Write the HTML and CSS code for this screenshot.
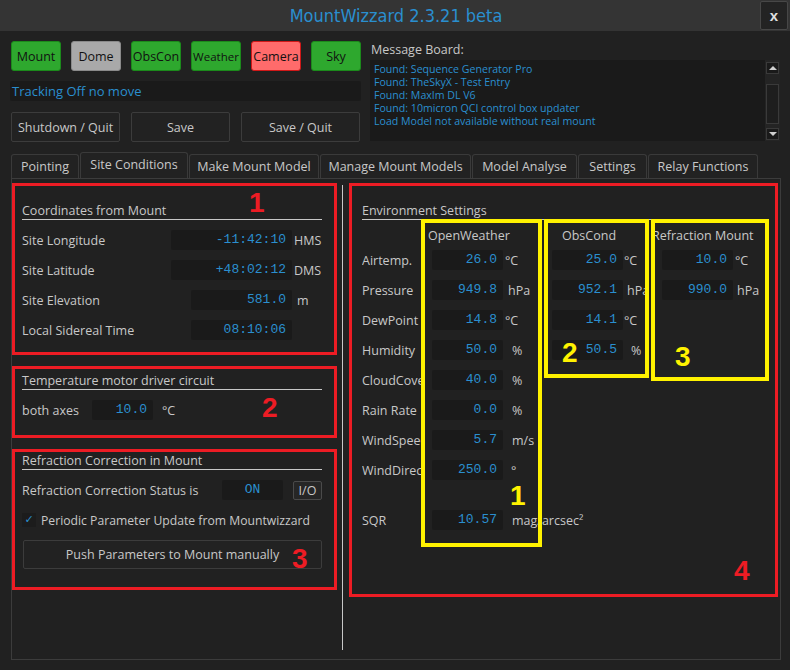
FILE: index.html
```html
<!DOCTYPE html>
<html>
<head>
<meta charset="utf-8">
<link rel="stylesheet" href="styles.css">
</head>
<body>
<div class="app">
  <header class="titlebar">
    <h1 class="title">MountWizzard 2.3.21 beta</h1>
    <button class="close">x</button>
  </header>

  <section class="top">
    <div class="controls">
      <div class="dev-row">
        <button class="dev ok">Mount</button>
        <button class="dev off">Dome</button>
        <button class="dev ok">ObsCon</button>
        <button class="dev ok small">Weather</button>
        <button class="dev err">Camera</button>
        <button class="dev ok">Sky</button>
      </div>
      <div class="status">Tracking Off no move</div>
      <div class="act-row">
        <button class="act a1">Shutdown / Quit</button>
        <button class="act a2">Save</button>
        <button class="act a3">Save / Quit</button>
      </div>
    </div>
    <div class="msgboard">
      <div class="mb-label">Message Board:</div>
      <div class="mb-box">
        <div class="mb-text">
          <div>Found: Sequence Generator Pro</div>
          <div>Found: TheSkyX - Test Entry</div>
          <div>Found: MaxIm DL V6</div>
          <div>Found: 10micron QCI control box updater</div>
          <div>Load Model not available without real mount</div>
        </div>
        <div class="scroll">
          <div class="sb-btn"><svg width="10" height="6" viewBox="0 0 10 6"><polygon points="1,5 5,1 9,5" fill="#d0d0d0"/></svg></div>
          <div class="sb-thumb"></div>
          <div class="sb-btn"><svg width="10" height="6" viewBox="0 0 10 6"><polygon points="1,1 9,1 5,5" fill="#d0d0d0"/></svg></div>
        </div>
      </div>
    </div>
  </section>

  <nav class="tabs">
    <div class="tab t1">Pointing</div>
    <div class="tab sel t2">Site Conditions</div>
    <div class="tab t3">Make Mount Model</div>
    <div class="tab t4">Manage Mount Models</div>
    <div class="tab t5">Model Analyse</div>
    <div class="tab t6">Settings</div>
    <div class="tab t7">Relay Functions</div>
  </nav>

  <main class="panel">
    <div class="left">
      <section class="grp g1">
        <div class="gtitle">Coordinates from Mount</div>
        <div class="rows">
          <div class="row"><span class="lbl">Site Longitude</span><span class="val w121">-11:42:10</span><span class="unit">HMS</span></div>
          <div class="row"><span class="lbl">Site Latitude</span><span class="val w121">+48:02:12</span><span class="unit">DMS</span></div>
          <div class="row"><span class="lbl">Site Elevation</span><span class="val w101">581.0</span><span class="unit pad">m</span></div>
          <div class="row"><span class="lbl">Local Sidereal Time</span><span class="val w101">08:10:06</span><span class="unit"></span></div>
        </div>
      </section>

      <section class="grp g2">
        <div class="gtitle">Temperature motor driver circuit</div>
        <div class="rows">
          <div class="row"><span class="lbl fixed">both axes</span><span class="val w61">10.0</span><span class="unit2">°C</span></div>
        </div>
      </section>

      <section class="grp g3">
        <div class="gtitle">Refraction Correction in Mount</div>
        <div class="rows">
          <div class="row"><span class="lbl">Refraction Correction Status is</span><span class="val w61 center">ON</span><button class="io">I/O</button></div>
          <div class="row"><span class="check">✓</span><span class="chk-lbl">Periodic Parameter Update from Mountwizzard</span></div>
        </div>
        <button class="push">Push Parameters to Mount manually</button>
      </section>
    </div>

    <div class="divider"></div>

    <section class="grp env">
      <div class="gtitle">Environment Settings</div>
      <div class="grid">
        <span></span>
        <span class="hdr h1">OpenWeather</span>
        <span></span>
        <span class="hdr h2">ObsCond</span>
        <span></span>
        <span class="hdr h3">Refraction Mount</span>
        <span></span>

        <span class="elbl">Airtemp.</span>
        <span class="val">26.0</span><span class="u u1">°C</span>
        <span class="val">25.0</span><span class="u u0">°C</span>
        <span class="val">10.0</span><span class="u u1">°C</span>

        <span class="elbl">Pressure</span>
        <span class="val">949.8</span><span class="u u4">hPa</span>
        <span class="val">952.1</span><span class="u u3">hPa</span>
        <span class="val">990.0</span><span class="u u3">hPa</span>

        <span class="elbl">DewPoint</span>
        <span class="val">14.8</span><span class="u u1">°C</span>
        <span class="val">14.1</span><span class="u u0">°C</span>
        <span></span><span></span>

        <span class="elbl">Humidity</span>
        <span class="val">50.0</span><span class="u u8">%</span>
        <span class="val">50.5</span><span class="u u7">%</span>
        <span></span><span></span>

        <span class="elbl">CloudCover</span>
        <span class="val">40.0</span><span class="u u8">%</span>
        <span></span><span></span><span></span><span></span>

        <span class="elbl">Rain Rate</span>
        <span class="val">0.0</span><span class="u u8">%</span>
        <span></span><span></span><span></span><span></span>

        <span class="elbl">WindSpeed</span>
        <span class="val">5.7</span><span class="u u8">m/s</span>
        <span></span><span></span><span></span><span></span>

        <span class="elbl">WindDirect.</span>
        <span class="val">250.0</span><span class="u u7">°</span>
        <span></span><span></span><span></span><span></span>

        <span class="spacer"></span>

        <span class="elbl">SQR</span>
        <span class="val">10.57</span><span class="u u8 wide">mag/arcsec²</span>
      </div>
    </section>
  </main>

  <div class="ybox y1"></div>
  <div class="ybox y2"></div>
  <div class="ybox y3"></div>

  <span class="num red n1">1</span>
  <span class="num red n2">2</span>
  <span class="num red n3">3</span>
  <span class="num red n4">4</span>
  <span class="num yel m1">1</span>
  <span class="num yel m2">2</span>
  <span class="num yel m3">3</span>
</div>
</body>
</html>
```

FILE: styles.css
```css
* { box-sizing: border-box; margin: 0; padding: 0; }

body {
  background: #212121;
  font-family: "Open Sans", "Noto Sans", sans-serif;
  font-size: 12px;
  color: #c8c8c8;
  width: 790px;
  height: 670px;
  overflow: hidden;
}

button { font-family: inherit; font-size: 12px; cursor: default; }

.app { position: relative; width: 790px; height: 670px; }

/* title bar */
.titlebar {
  height: 31px;
  background: #343434;
  display: grid;
  grid-template-columns: 30px 1fr 28px 2px;
  align-items: center;
}
.title {
  grid-column: 2;
  text-align: center;
  font-family: "DejaVu Sans Condensed", "DejaVu Sans", sans-serif;
  font-stretch: condensed;
  font-weight: normal;
  font-size: 18px;
  color: #2a8fcf;
  padding-left: 2px;
}
.close {
  grid-column: 3;
  height: 29px;
  background: #232323;
  border: 1px solid #474747;
  border-radius: 2px;
  color: #e0e0e0;
  font-weight: bold;
  font-size: 15px;
  font-family: "Liberation Sans", sans-serif;
}

/* top area */
.top { display: flex; padding: 10px 0 0 11px; }
.controls { width: 350px; }
.dev-row { display: flex; gap: 10px; }
.dev {
  width: 50px;
  height: 30px;
  border-radius: 3px;
  color: #111;
  font-size: 12.5px;
}
.dev.small { font-size: 11.5px; }
.dev.ok { background: #2ea82e; border: 1px solid #1b8a1b; }
.dev.off { background: #a9a9a9; border: 1px solid #8a8a8a; }
.dev.err { background: #ff6b6b; border: 1px solid #d01818; }

.status {
  margin-top: 10px;
  margin-left: -1px;
  height: 20px;
  background: #1a1a1a;
  border-radius: 2px;
  color: #2a8fcf;
  font-size: 13px;
  line-height: 20px;
  padding-left: 2px;
}
.act-row { display: flex; gap: 11px; margin-top: 11px; }
.act {
  height: 30px;
  background: #222;
  border: 1px solid #3c3c3c;
  border-radius: 2px;
  color: #c8c8c8;
  font-size: 12.5px;
}
.a1 { width: 109px; }
.a2 { width: 99px; }
.a3 { width: 119px; }

.msgboard { margin-left: 9px; width: 410px; }
.mb-label { line-height: 17px; margin-bottom: 2px; padding-left: 1px; font-size: 12.5px; }
.mb-box { height: 81px; background: #1a1a1a; display: flex; }
.mb-text {
  flex: 1;
  padding: 3px 4px;
  color: #2a8fcf;
  font-size: 10.6px;
  line-height: 13px;
  white-space: nowrap;
}
.scroll {
  width: 15px;
  background: #242424;
  display: flex;
  flex-direction: column;
  padding: 2px 1px 1px 1px;
}
.sb-btn {
  height: 12px;
  background: #1a1a1a;
  border: 1px solid #3a3a3a;
  display: flex;
  align-items: center;
  justify-content: center;
}
.sb-thumb {
  margin: 10px 0 4px;
  height: 40px;
  border: 1px solid #3a3a3a;
  background: #1e1e1e;
}

/* tabs */
.tabs {
  margin-top: 10px;
  height: 26px;
  display: flex;
  align-items: flex-end;
  padding-left: 11px;
}
.tab {
  flex: 0 0 auto;
  height: 24px;
  border: 1px solid #3a3a3a;
  border-bottom: none;
  border-radius: 3px 3px 0 0;
  margin-right: 1px;
  text-align: center;
  white-space: nowrap;
  line-height: 23px;
  font-size: 12.5px;
  color: #c8c8c8;
  background: #222;
}
.tab.sel { height: 26px; line-height: 24px; }
.t1 { width: 68px; }
.t2 { width: 108px; }
.t3 { width: 130px; }
.t4 { width: 151px; }
.t5 { width: 105px; }
.t6 { width: 69px; }
.t7 { width: 110px; }

/* panel */
.panel {
  margin-left: 11px;
  width: 770px;
  height: 482px;
  border: 1px solid #3c3c3c;
  display: flex;
  align-items: flex-start;
  padding-top: 4px;
}
.left { width: 325px; }
.divider {
  width: 1px;
  height: 465px;
  margin: 2px 6px 0 5px;
  background: #c8c8c8;
}

.grp {
  border: 3px solid #ed1c24;
  padding: 0 12px 0 7px;
}
.g1 { padding-top: 16px; padding-bottom: 7px; }
.g2 { margin-top: 11px; padding-top: 3px; padding-bottom: 10px; }
.g3 { margin-top: 11px; padding-top: 0; padding-bottom: 18px; }

.gtitle {
  line-height: 17px;
  border-bottom: 1px solid #c8c8c8;
  font-size: 12.5px;
}
.rows { margin-top: 5px; }
.row { display: flex; align-items: center; height: 30px; }
.lbl { flex: 1; font-size: 12.5px; white-space: nowrap; }
.lbl.fixed { flex: 0 0 70px; }

.val {
  height: 20px;
  background: #1a1a1a;
  border-radius: 2px;
  font-family: "Liberation Mono", monospace;
  font-size: 13px;
  color: #2a8fcf;
  text-align: right;
  padding-right: 6px;
  line-height: 20px;
  white-space: nowrap;
}
.val.center { text-align: center; padding-right: 0; }
.w121 { width: 121px; }
.w101 { width: 101px; }
.w61 { width: 61px; }
.unit { width: 30px; padding-left: 2px; font-size: 12.5px; }
.unit.pad { padding-left: 5px; }
.unit2 { padding-left: 9px; font-size: 12.5px; }

.io {
  width: 29px;
  height: 19px;
  margin-left: 10px;
  background: #262626;
  border: 1px solid #4a4a4a;
  border-radius: 2px;
  color: #c8c8c8;
  font-size: 12.5px;
}
.check {
  width: 14px;
  height: 14px;
  background: #1c1c1c;
  color: #2a8fcf;
  font-family: "DejaVu Sans", sans-serif;
  font-size: 11px;
  line-height: 14px;
  text-align: center;
  font-weight: bold;
}
.chk-lbl { margin-left: 5px; font-size: 12.2px; white-space: nowrap; }
.push {
  display: block;
  margin: 5px 0 0 1px;
  width: 299px;
  height: 29px;
  background: #222;
  border: 1px solid #3c3c3c;
  border-radius: 2px;
  color: #c8c8c8;
  font-size: 12.5px;
}

/* environment */
.env {
  width: 429px;
  height: 414px;
  padding: 16px 10px 0 10px;
}
.grid {
  margin-top: 5px;
  display: grid;
  grid-template-columns: 70px 71px 49px 71px 39px 71px 1fr;
  grid-template-rows: 20px repeat(8, 30px) 20px 30px;
  align-items: center;
}
.hdr { white-space: nowrap; font-size: 12.5px; }
.h1 { margin-left: -4px; }
.h2 { margin-left: 10px; }
.h3 { margin-left: -10px; }
.elbl {
  width: 60px;
  overflow: hidden;
  white-space: nowrap;
  font-size: 12.5px;
}
.spacer { grid-column: 1 / -1; }
.u { font-size: 12.5px; white-space: nowrap; }
.u0 { padding-left: 1px; }
.u1 { padding-left: 2px; }
.u3 { padding-left: 4px; }
.u4 { padding-left: 5px; }
.u7 { padding-left: 8px; }
.u8 { padding-left: 9px; }
.wide { grid-column: span 3; }

/* annotations (overlay) */
.ybox { position: absolute; border: 4px solid #fff200; }
.y1 { left: 421px; top: 219px; width: 121px; height: 328px; }
.y2 { left: 544px; top: 219px; width: 105px; height: 159px; }
.y3 { left: 651px; top: 219px; width: 118px; height: 162px; }

.num {
  position: absolute;
  font-family: "Liberation Sans", sans-serif;
  font-weight: bold;
  font-size: 28px;
  line-height: 28px;
}
.num.red { color: #ed1c24; }
.num.yel { color: #fff200; }
.n1 { left: 249px; top: 189px; }
.n2 { left: 262px; top: 394px; }
.n3 { left: 292px; top: 545px; }
.n4 { left: 734px; top: 557px; }
.m1 { left: 510px; top: 482px; }
.m2 { left: 562px; top: 339px; }
.m3 { left: 675px; top: 343px; }
```
